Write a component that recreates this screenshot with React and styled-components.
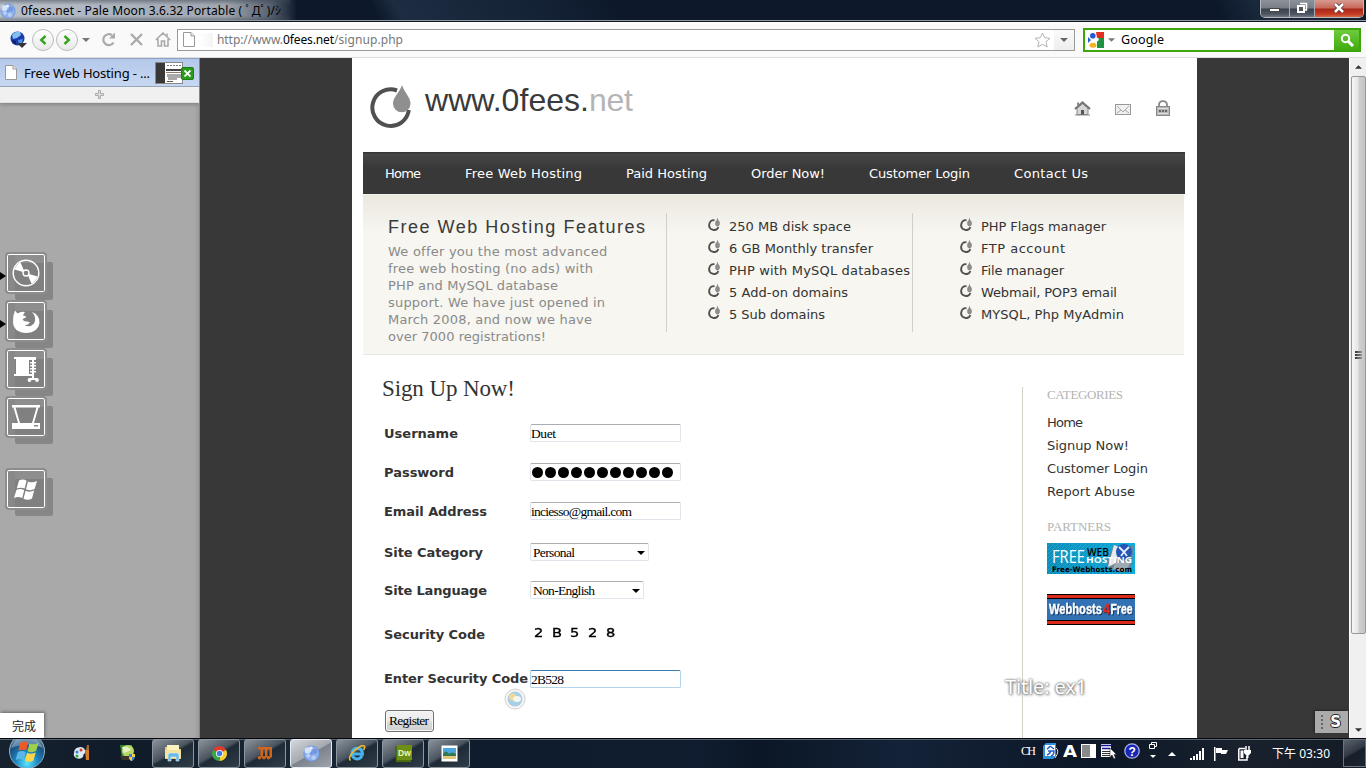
import React, { useLayoutEffect, useRef } from "react";
import styled, { createGlobalStyle, css } from "styled-components";

const SANS = `"DejaVu Sans", sans-serif`;
const SERIF = `"Liberation Serif", serif`;
const UI = `"Noto Sans", "Open Sans", "Noto Sans CJK TC", sans-serif`;

const GlobalStyle = createGlobalStyle`
  * { box-sizing: border-box; }
  body { margin: 0; overflow: hidden; background: #383838; }
  svg { display: block; flex: none; }
  ul { list-style: none; margin: 0; padding: 0; }
`;

/* ---------- text tracked to a fixed measure ---------- */
const Track = styled.span`
  display: inline-block;
  white-space: pre;
  flex: none;
`;

function Fit({ w, children, className }) {
  const ref = useRef(null);
  useLayoutEffect(() => {
    const el = ref.current;
    el.style.letterSpacing = "0px";
    el.style.width = "auto";
    const natural = el.getBoundingClientRect().width;
    el.style.letterSpacing = `${(w - natural) / Math.max(1, children.length - 1)}px`;
    el.style.width = `${w}px`;
  }, [w, children]);
  return <Track ref={ref} className={className}>{children}</Track>;
}

/* ---------- window frame ---------- */
const Desktop = styled.div`
  position: relative;
  width: 1366px;
  height: 768px;
  display: flex;
  flex-direction: column;
  overflow: hidden;
`;

const TitleBar = styled.header`
  height: 22px;
  flex: none;
  display: flex;
  align-items: flex-start;
  justify-content: space-between;
  border-bottom: 1px solid #10151d;
  box-shadow: inset 0 -1px 0 #8f97a1;
  background:
    linear-gradient(rgba(60, 70, 82, 0.5) 0, rgba(60, 70, 82, 0) 5px, rgba(60, 70, 82, 0) 16px, rgba(60, 70, 82, 0.55) 21px) 0 0 / 290px 100% no-repeat,
    linear-gradient(90deg, rgba(196, 202, 210, 0.95) 0, rgba(176, 182, 190, 0.9) 225px, rgba(120, 129, 141, 0.7) 270px, rgba(30, 44, 66, 0) 297px),
    linear-gradient(60deg, transparent 330px, rgba(60, 80, 106, 0.35) 350px, rgba(40, 58, 84, 0.25) 480px, transparent 540px),
    linear-gradient(65deg, transparent 1110px, rgba(58, 78, 104, 0.4) 1160px, transparent 1250px),
    #0d192b;
`;

const TitleLabel = styled.div`
  display: flex;
  align-items: center;
  gap: 5px;
  height: 21px;
  font: 12px/21px ${UI};
  color: #000;
`;

const WinButtons = styled.div`
  display: flex;
  width: 104px;
  height: 18px;
  margin-right: 2px;
  border: 1px solid #b6bac0;
  border-top: 0;
  border-radius: 0 0 5px 5px;
  overflow: hidden;
  box-shadow: 0 0 0 1px #1a222e;
`;

const WinButton = styled.div`
  width: ${(p) => p.$w}px;
  display: flex;
  align-items: center;
  justify-content: center;
  padding-top: ${(p) => p.$drop || 0}px;
  padding-bottom: 1px;
  border-right: ${(p) => (p.$close ? "0" : "1px solid #a9adb3")};
  background: ${(p) =>
    p.$close
      ? "linear-gradient(#d79a90 0, #c8685a 8px, #a8281a 9px, #c33a22 14px, #e07850 18px)"
      : "linear-gradient(#8d9299 0, #777d86 8px, #3a424e 9px, #4d5561 14px, #7d848e 18px)"};
`;

/* ---------- toolbar ---------- */
const Toolbar = styled.div`
  height: 36px;
  flex: none;
  display: flex;
  align-items: center;
  padding: 0 5px 0 6px;
  background: linear-gradient(#ffffff 0, #f9f9f9 3px, #fafafa);
  border-bottom: 1px solid #dedede;
`;

const NavSlot = styled.div`
  width: ${(p) => p.$w}px;
  flex: none;
  display: flex;
  justify-content: center;
`;

const RoundButton = styled.div`
  width: 22px;
  height: 22px;
  flex: none;
  margin-right: 2px;
  border: 1px solid #bcbcbc;
  border-radius: 50%;
  background: linear-gradient(#fff, #e9e9e9);
  display: flex;
  align-items: center;
  justify-content: center;
`;

const AddressBar = styled.div`
  width: 898px;
  height: 22px;
  flex: none;
  display: flex;
  align-items: center;
  border: 1px solid #999;
  background: #fff;
  padding-left: 5px;
  font: 12px/20px ${UI};
  color: #777;
`;

const UrlText = styled.div`
  flex: 1;
  display: flex;
  b { font-weight: 400; color: #000; }
`;

const Blotch = styled.div`
  width: 13px;
  height: 14px;
  margin: 0 4px 0 5px;
  background: linear-gradient(90deg, #fff, #f3f3f3);
`;

const DropCell = styled.div`
  width: 20px;
  height: 20px;
  margin-left: 3px;
  background: linear-gradient(#fafafa, #eee);
  display: flex;
  align-items: center;
  justify-content: center;
`;

const SearchBar = styled.div`
  width: 278px;
  height: 24px;
  flex: none;
  margin-left: auto;
  display: flex;
  align-items: center;
  border: 2px solid #3ca60d;
  background: #fff;
  padding-left: 3px;
  font: 12.5px/20px ${UI};
  color: #000;
`;

const SearchButton = styled.div`
  margin-left: auto;
  width: 25px;
  height: 20px;
  display: flex;
  align-items: center;
  justify-content: center;
  background: linear-gradient(#6fcb3d, #41ab10);
`;

/* ---------- browser body ---------- */
const Body = styled.div`
  height: 680px;
  flex: none;
  display: flex;
`;

const TabPanel = styled.aside`
  width: 200px;
  flex: none;
  display: flex;
  flex-direction: column;
  background: #a9a9a9;
  box-shadow: inset -1px 0 0 #858585, inset -4px 0 3px -1px #999;
`;

const Tab = styled.div`
  width: 199px;
  height: 29px;
  display: flex;
  align-items: center;
  padding-left: 5px;
  background: linear-gradient(#b4c8ea, #c8d8f3);
  border-top: 1px solid #8fa2c4;
  border-bottom: 1px solid #99a6ba;
  font: 13px/26px ${UI};
  color: #000;
`;

const TabThumb = styled.div`
  position: relative;
  margin-left: 5px;
`;

const TabClose = styled.div`
  position: absolute;
  right: -11px;
  top: 5px;
  width: 13px;
  height: 13px;
  border-radius: 2px;
  background: #2c9a1c;
  border: 1px solid #1f7d12;
  display: flex;
  align-items: center;
  justify-content: center;
`;

const NewTab = styled.div`
  width: 199px;
  height: 16px;
  display: flex;
  align-items: center;
  justify-content: center;
  background: #f0f0f0;
  border-bottom: 1px solid #e2e2e2;
  box-shadow: 0 2px 3px #888;
`;

const Dock = styled.div`
  display: flex;
  flex-direction: column;
  gap: 10px;
  padding: 151px 0 0 7px;
`;

const DockTile = styled.div`
  position: relative;
  width: 38px;
  height: 38px;
  margin-top: ${(p) => (p.$apart ? 24 : 0)}px;
  display: flex;
  align-items: center;
  justify-content: center;
  border: 1px solid #fff;
  border-radius: 2px;
  outline: 2px solid #8d8d8d;
  background: linear-gradient(#888, #888) 0 0 / 7px 100% no-repeat, linear-gradient(#8e8e8e, #8e8e8e) 0 0 / 100% 8px no-repeat, #808080;
  box-shadow: 8px 8px 0 0 #868686;
`;

const RunningMark = styled.div`
  position: absolute;
  left: -8px;
  top: 17px;
  border: 4px solid transparent;
  border-left: 6px solid #000;
  border-right: 0;
`;

const Status = styled.div`
  width: 44px;
  height: 25px;
  margin-top: auto;
  padding-left: 12px;
  background: #fff;
  box-shadow: 1px -1px 3px #666;
  font: 12px/26px "Noto Sans CJK TC", sans-serif;
  color: #222;
`;

const Viewport = styled.main`
  width: 1149px;
  flex: none;
  padding-left: 152px;
  background: #383838;
`;

const Page = styled.div`
  width: 845px;
  height: 680px;
  padding: 0 12px 0 11px;
  background: #fff;
  overflow: hidden;
  font: 13px/16px ${SANS};
  color: #333;
`;

const SiteHeader = styled.div`
  height: 94px;
  display: flex;
  align-items: flex-start;
`;

const LogoMark = styled.div`
  margin: 27px 0 0 7px;
`;

const SiteName = styled.div`
  margin: 24px 0 0 13px;
  font: 32px/37px "Liberation Sans", sans-serif;
  color: #3a3a3a;
  display: flex;
`;

const SiteTld = styled.span`
  color: #b5b5b5;
`;

const QuickLinks = styled.div`
  margin: 42px 15px 0 auto;
  display: flex;
  align-items: center;
  gap: 24px;
`;

const SiteNav = styled.nav`
  height: 42px;
  display: flex;
  gap: 44px;
  padding: 0 22px;
  line-height: 43px;
  color: #fff;
  background: linear-gradient(#363636 0, #363636 1px, #484848 2px, #383838 16px);
`;

const Features = styled.section`
  width: 821px;
  height: 161px;
  display: flex;
  padding-top: 19px;
  background: linear-gradient(#fbfaf8 0, #ebe8e0 1px, #f7f6f1 40px);
  border-bottom: 1px solid #e9e8db;
`;

const Intro = styled.div`
  width: 304px;
  height: 119px;
  padding-left: 25px;
  border-right: 1px solid #d0d0c6;
  color: #8a8a8a;
  line-height: 17px;
`;

const IntroTitle = styled.h2`
  margin: 0 0 4px;
  font: 18px/24px "Liberation Sans", sans-serif;
  padding-top: 2px;
  color: #3a3a3a;
`;

const FeatureList = styled.ul`
  width: ${(p) => p.$w}px;
  height: 119px;
  padding: 2px 0 0 ${(p) => p.$pad}px;
  border-right: ${(p) => (p.$ruled ? "1px solid #d0d0c6" : "0")};
`;

const FeatureItem = styled.li`
  height: 22px;
  display: flex;
  align-items: flex-start;
  gap: 8px;
  line-height: 24px;
  svg { margin-top: 2px; }
`;

const Columns = styled.div`
  display: flex;
`;

const FormColumn = styled.form`
  width: 659px;
  padding: 20px 0 0 21px;
`;

const FormTitle = styled.h1`
  margin: 0 0 0 -2px;
  height: 29px;
  font: 23px/28px ${SERIF};
  color: #333;
`;

const Row = styled.div`
  height: ${(p) => p.$h}px;
  display: flex;
  align-items: center;
`;

const Label = styled.label`
  width: 146px;
  flex: none;
  font-weight: 700;
  line-height: 16px;
  padding-top: ${(p) => (p.$raised ? 0 : 1)}px;
  padding-bottom: ${(p) => (p.$raised ? 1 : 0)}px;
`;

const Field = styled.div`
  width: ${(p) => p.$w || 151}px;
  height: 18px;
  display: flex;
  align-items: center;
  justify-content: space-between;
  padding: ${(p) => (p.$select ? "1px 3px 0 2px" : "1px 0 0 0")};
  border: 1px solid #dfe3ea;
  border-top-color: #abadb3;
  border-radius: 2px;
  background: #fff;
  font: 13.5px/16px ${SERIF};
  color: #000;
  ${(p) => p.$focus && css`
    border-color: #b3d3ea;
    border-top-color: #3d7bad;
  `}
`;

const Dots = styled.div`
  display: flex;
  gap: 2px;
  padding: 0 0 1px 1px;
  i { width: 11px; height: 11px; border-radius: 50%; background: #000; }
`;

const Code = styled.div`
  display: flex;
  padding: 0 0 2px 4px;
  font: 13px/14px ${SANS};
  color: #000;
  span {
    width: 18px;
    transform: scaleX(1.12);
    transform-origin: left;
    -webkit-text-stroke: 0.4px #000;
  }
`;

const Submit = styled.button`
  display: block;
  width: 49px;
  height: 22px;
  margin: 4px 0 0 1px;
  padding: 0 0 1px 3px;
  border: 1px solid #707070;
  border-radius: 3px;
  box-shadow: inset 0 0 0 1px #f8f8f8;
  background: linear-gradient(#f2f2f2 0, #ebebeb 50%, #dcdcdc 51%, #cfcfcf);
  font: 13.5px/19px ${SERIF};
  color: #000;
  text-align: left;
`;

const SideColumn = styled.aside`
  width: 163px;
  height: 360px;
  margin-top: 32px;
  padding-left: 24px;
  border-left: 1px solid #d3d0c6;
`;

const SideTitle = styled.h3`
  margin: ${(p) => p.$top || 0}px 0 0;
  font: 13px/16px ${SERIF};
  color: #b4b4b4;
`;

const SideLinks = styled.ul`
  padding-top: 8px;
  li { height: 23px; line-height: 23px; }
`;

const Banner = styled.svg.attrs({ width: 88, height: 31, viewBox: "0 0 88 31" })`
  margin-top: ${(p) => p.$top}px;
  .raised { filter: drop-shadow(1px 1px 0 #163a66); }
`;

const Scrollbar = styled.div`
  width: 17px;
  flex: none;
  display: flex;
  flex-direction: column;
  align-items: center;
  background: #f0f0f0;
  border-left: 1px solid #fff;
`;

const ScrollArrow = styled.div`
  height: 17px;
  display: flex;
  align-items: center;
`;

const Thumb = styled.div`
  width: 15px;
  height: 558px;
  margin: 1px 0 auto;
  border: 1px solid #979797;
  border-radius: 2px;
  background: linear-gradient(90deg, #f6f6f6, #e6e6e6 45%, #cfcfd0 55%, #c4c4c6);
  display: flex;
  flex-direction: column;
  align-items: center;
  justify-content: center;
  gap: 1px;
  i { width: 7px; height: 2px; background: linear-gradient(90deg, #333, #999); }
`;

/* ---------- floating overlays ---------- */
const BusyRing = styled.div`
  position: absolute;
  left: 504px;
  top: 688px;
`;

const Caption = styled.div`
  position: absolute;
  left: 1005px;
  top: 673px;
  font: 20px/28px ${UI};
  color: #fff;
  text-shadow: 0 0 2px #666, 1px 1px 3px #888, 0 0 3px #aaa;
`;

const ScriptBadge = styled.div`
  position: absolute;
  left: 1315px;
  top: 711px;
  width: 33px;
  height: 22px;
  display: flex;
  align-items: center;
  justify-content: space-between;
  padding: 0 7px 0 6px;
  background: #ababab;
  box-shadow: -1px -1px 2px #252525;
  font: 700 15px/22px ${SANS};
  color: #fff;
  text-shadow: 1px 0 #222, -1px 0 #222, 0 1px #222, 0 -1px #222;
`;

/* ---------- taskbar ---------- */
const Taskbar = styled.footer`
  height: 30px;
  flex: none;
  display: flex;
  align-items: flex-start;
  border-top: 1px solid #04070b;
  box-shadow: inset 0 1px 0 #5b6572;
  background: linear-gradient(90deg, #17222f 0, #101b29 130px, #1a2836 300px, #0f1c2d 480px, #101d30 700px, #0b1726 760px, #142238 900px, #0c1727 1100px, #19212d 1240px, #131b27);
`;

const StartOrb = styled.div`
  width: 38px;
  height: 29px;
  margin-left: 8px;
  overflow: hidden;
`;

const Quick = styled.div`
  width: ${(p) => p.$w}px;
  display: flex;
  justify-content: center;
  padding-top: 5px;
`;

const TaskButtons = styled.div`
  display: flex;
  gap: 4px;
  margin-left: 14px;
`;

const TaskButton = styled.div`
  width: 42px;
  height: 29px;
  display: flex;
  align-items: center;
  justify-content: center;
  padding-bottom: 1px;
  border: 1px solid ${(p) => (p.$active ? "#e8ebef" : "#8d959f")};
  border-radius: 3px;
  background: ${(p) =>
    p.$active
      ? "linear-gradient(150deg, #d5d8dc 0, #a4a9b0 50%, #7b828b 52%, #9ea4ac)"
      : "linear-gradient(150deg, #8b929b 0, #4b5560 45%, #1f2a37 52%, #313c49)"};
`;

const Tray = styled.div`
  margin-left: auto;
  height: 29px;
  display: flex;
  align-items: center;
`;

const TraySlot = styled.div`
  width: ${(p) => p.$w}px;
  padding-bottom: ${(p) => p.$up || 0}px;
  color: #fff;
  font: 12px/16px ${(p) => (p.$serif ? SERIF : UI)};
`;

const ShowDesktop = styled.div`
  width: 23px;
  height: 28px;
  align-self: flex-start;
  border: 1px solid #6a727d;
  background: linear-gradient(150deg, #5b636e 0, #303944 45%, #161e2a 52%, #1c2530);
`;

/* ---------- icons ---------- */
const Logo = () => (
  <svg width="42" height="44" viewBox="0 0 42 44">
    <path d="M27 5.500A18.300 18.300 0 1 0 38.800 25" fill="none" stroke="#505050" strokeWidth="4" />
    <path d="M32 0C34 7 40.500 12 40.500 18.500A8.700 8.700 0 0 1 23 18.500C23 12 30 7 32 0Z" fill="#8f8f8f" />
  </svg>
);

const Bullet = () => (
  <svg width="13" height="14" viewBox="0 0 13 14">
    <path d="M6.500 3.200A4.900 4.900 0 1 0 10.500 10.200" fill="none" stroke="#505050" strokeWidth="1.900" />
    <path d="M9.500 .5Q10 3.500 11.800 5V7.500Q11 9.500 9.500 9.500T7.200 7.500V5Q9 3.500 9.500 .5Z" fill="#8c8c8c" />
  </svg>
);

const Arrow = ({ color = "#777", w = 8, h = 4, up }) => (
  <svg width={w} height={h} viewBox="0 0 8 4">
    <path d={up ? "M0 4L4 0L8 4Z" : "M0 0H8L4 4Z"} fill={color} />
  </svg>
);

const PageIcon = () => (
  <svg width="12" height="15" viewBox="0 0 12 15">
    <path d="M.5.5H8L11.5 4V14.5H.5Z" fill="#fff" stroke="#999" />
    <path d="M8 .5V4H11.5" fill="#eee" stroke="#999" />
  </svg>
);

const MoonIcon = ({ size }) => (
  <svg width={size} height={size} viewBox="0 0 16 16">
    <circle cx="8" cy="8" r="7.600" fill="#6e96de" />
    <circle cx="8" cy="8" r="6.800" fill="#8fb0ea" />
    <circle cx="4.500" cy="5" r="3" fill="#d4e2fa" /><circle cx="7.500" cy="3" r="1.500" fill="#e6effc" />
    <circle cx="10" cy="12" r="2.200" fill="#b4cbf5" /><circle cx="5" cy="10" r="1.800" fill="#bdd1f6" />
    <circle cx="11" cy="6" r="2.400" fill="#7398e0" /><circle cx="8" cy="8" r="1.600" fill="#769be2" />
  </svg>
);

const WindowsFlag = ({ colors, size }) => (
  <svg width={size} height={size} viewBox="0 0 24 24">
    <path d="M5 2.500Q9 .5 12.600 2.800L10.600 10.600Q7 8.800 2.800 10.600Z" fill={colors[0]} />
    <path d="M14 3.400Q18 5.400 23 3L20.600 11Q16.500 13.200 12 11.200Z" fill={colors[1]} />
    <path d="M2.400 12Q6.600 10 10.200 12.200L8.200 20Q4.500 18 0 20Z" fill={colors[2]} />
    <path d="M11.600 12.800Q15.800 14.800 20.200 12.600L18 20.600Q14 23 9.500 20.800Z" fill={colors[3]} />
  </svg>
);

const dockTiles = [
  { running: true, art: (
    <g fill="none" stroke="#fff" strokeWidth="1.400">
      <circle cx="15" cy="15" r="12.800" /><circle cx="15" cy="15" r="3" />
      <path d="M13 12.500L9.500 4.500A12 12 0 0 0 3.500 11.500L12 14ZM17 17.500L20.500 25.500A12 12 0 0 0 26.500 18.500L18 16Z" fill="#fff" stroke="none" />
    </g>) },
  { running: true, art: (
    <path d="M4 4.500L6.500 7.500Q10 5 14 6Q12.500 7.500 12 9.500Q15 9.500 15 11.500L11.500 13Q12.500 16 16.500 15.500L19 16.500Q17 19.500 13.500 19Q19 22 23 17.500Q26 11.500 21 6Q29 9 28.500 17Q27 26.500 15.500 27Q3 26.500 2 16.500Q1.500 10 4 4.500Z" fill="#fff" />) },
  { art: (
    <g fill="#fff">
      <path d="M3 3H25V6H18V20H23V22H3V20H5V5H3Z" />
      <path d="M21 6H23V24H21ZM19 8H25V9.500H19ZM19 11H25V12.500H19ZM19 14H25V15.500H19ZM19 17H25V18.500H19ZM18 24H26V26H18Z" />
      <circle cx="18.500" cy="26" r="1.900" /><circle cx="26" cy="26" r="1.900" />
    </g>) },
  { art: (
    <g fill="#fff">
      <path d="M1 3H29V5.500H27.500L23 21H29V27H1V21H7L2.500 5.500H1ZM4.500 5.500L9 21H21L25.500 5.500Z" fillRule="evenodd" />
      <rect x="23" y="23" width="4" height="1.500" fill="#888" />
    </g>) },
  { apart: true, art: (
    <g transform="translate(3 4)"><WindowsFlag size={24} colors={["#fff", "#fff", "#fff", "#fff"]} /></g>) },
];

const taskIcons = [
  <svg width="20" height="20" viewBox="0 0 20 20">
    <path d="M2 4H8L9 6H18V16H2Z" fill="#e9cf76" /><path d="M4 2H16V8H4Z" fill="#fbf2bd" />
    <path d="M2 7H18V15H2Z" fill="#f5e29b" /><path d="M5 18V12Q5 10 7 10H14Q16 10 16 12V18H13V14H8V18Z" fill="#6cb9e8" stroke="#d9f0fc" strokeWidth=".6" />
  </svg>,
  <svg width="15" height="15" viewBox="0 0 16 16">
    <path d="M8 8L1.100 4A8 8 0 0 1 14.900 4Z" fill="#dd3b2e" /><path d="M8 8L14.900 4A8 8 0 0 1 8 16Z" fill="#fbcf2f" />
    <path d="M8 8L8 16A8 8 0 0 1 1.100 4Z" fill="#3aa64a" /><circle cx="8" cy="8" r="3.800" fill="#fff" /><circle cx="8" cy="8" r="2.900" fill="#3c7ce0" />
  </svg>,
  <svg width="16" height="16" viewBox="0 0 16 16">
    <path d="M1 2H15V12.500H12.500V4.500H10.500V12.500H8V4.500H6V12.500H3.500V4.500H1Z" fill="#d0661c" />
    <circle cx="2.500" cy="12.800" r="1.800" fill="#d0661c" /><circle cx="7" cy="12.800" r="1.800" fill="#d0661c" /><circle cx="11.500" cy="12.800" r="1.800" fill="#d0661c" />
  </svg>,
  <MoonIcon size={17} />,
  <svg width="18" height="18" viewBox="0 0 18 18">
    <path d="M14 11.500Q12.500 15 9 15Q4 14.500 4 9.500Q4.500 4.500 9 4.200Q14.500 4.500 14.500 10H5" fill="none" stroke="#45b2ee" strokeWidth="3" />
    <path d="M2.500 16.500Q-.5 14 5.500 7.500Q13 .5 16.200 2Q17.500 3 15.500 6" fill="none" stroke="#f2bd2d" strokeWidth="1.500" />
  </svg>,
  <svg width="17" height="17" viewBox="0 0 17 17">
    <path d="M0 1H16V17H1Z" fill="#4c6b0c" /><rect x="2" width="15" height="15" fill="#6d9014" />
    <text x="3" y="11" fontSize="8.500" fontWeight="700" fontFamily="Liberation Sans" fill="#eaf7bd">Dw</text>
  </svg>,
  <svg width="17" height="17" viewBox="0 0 17 17">
    <rect x=".5" y=".5" width="16" height="16" fill="#fff" /><rect x="2" y="3" width="13" height="11" fill="#4ba5de" />
    <path d="M2 9Q5 4 8 9Q11 6 15 9V12H2Z" fill="#327854" /><path d="M2 11H15V14H2Z" fill="#e2c77a" />
  </svg>,
];

const navItems = [["Home", 36], ["Free Web Hosting", 117], ["Paid Hosting", 81], ["Order Now!", 74], ["Customer Login", 101], ["Contact Us", 74]];
const introLines = [["We offer you the most advanced", 219], ["free web hosting (no ads) with", 205], ["PHP and MySQL database", 170], ["support. We have just opened in", 217], ["March 2008, and now we have", 204], ["over 7000 registrations!", 158]];
const featuresA = [["250 MB disk space", 122], ["6 GB Monthly transfer", 144], ["PHP with MySQL databases", 181], ["5 Add-on domains", 119], ["5 Sub domains", 96]];
const featuresB = [["PHP Flags manager", 125], ["FTP account", 84], ["File manager", 83], ["Webmail, POP3 email", 136], ["MYSQL, Php MyAdmin", 143]];
const sideLinks = [["Home", 36], ["Signup Now!", 82], ["Customer Login", 101], ["Report Abuse", 88]];

const Select = ({ w, textW, children }) => (
  <Field $w={w} $select>
    <Fit w={textW}>{children}</Fit>
    <Arrow color="#000" w={8} h={4} />
  </Field>
);

const FeatureColumn = ({ items, ...rest }) => (
  <FeatureList {...rest}>
    {items.map(([t, w]) => (
      <FeatureItem key={t}><Bullet /><Fit w={w}>{t}</Fit></FeatureItem>
    ))}
  </FeatureList>
);

function BrowserTitle() {
  return (
    <TitleBar>
      <TitleLabel><MoonIcon size={16} /><Fit w={260}>0fees.net - Pale Moon 3.6.32 Portable ( ﾟДﾟ)/ｼ</Fit></TitleLabel>
      <WinButtons>
        <WinButton $w={29} $drop={4}><svg width="11" height="4"><rect x=".5" y=".5" width="10" height="3" fill="#fff" stroke="#444" /></svg></WinButton>
        <WinButton $w={26}>
          <svg width="12" height="12" viewBox="0 0 12 12"><path d="M4 1.500H10.500V8H8.500" fill="none" stroke="#fff" strokeWidth="1.500" /><rect x="2" y="4" width="6" height="6" fill="#555" stroke="#fff" strokeWidth="2" /></svg>
        </WinButton>
        <WinButton $w={48} $close>
          <svg width="12" height="10" viewBox="0 0 12 10"><path d="M2 1L10 9M10 1L2 9" stroke="#4a2a28" strokeWidth="4" /><path d="M2 1L10 9M10 1L2 9" stroke="#fff" strokeWidth="2.600" /></svg>
        </WinButton>
      </WinButtons>
    </TitleBar>
  );
}

function BrowserToolbar() {
  return (
    <Toolbar>
      <NavSlot $w={26}>
        <svg width="18" height="17" viewBox="0 0 18 17">
          <circle cx="7.500" cy="7.500" r="7" fill="#1c3cae" /><path d="M2 4Q5 0 10 1L11 4L7 7L3 8Z" fill="#7fc0f0" /><path d="M8 9L13 8L12 12L9 14Z" fill="#4a90e0" /><path d="M2 9L6 10L6 13L3 12Z" fill="#0a1e70" />
          <path d="M7 12H17L12 17Z" fill="#333" />
        </svg>
      </NavSlot>
      <RoundButton><svg width="8" height="10"><path d="M6.500 1L2.200 5L6.500 9" fill="none" stroke="#34a51c" strokeWidth="2.400" /></svg></RoundButton>
      <RoundButton><svg width="8" height="10"><path d="M1.500 1L5.800 5L1.500 9" fill="none" stroke="#34a51c" strokeWidth="2.400" /></svg></RoundButton>
      <NavSlot $w={11}><Arrow /></NavSlot>
      <NavSlot $w={35}>
        <svg width="15" height="15" viewBox="0 0 15 15"><path d="M11 3.200A5.500 5.500 0 1 0 12.500 10.500" fill="none" stroke="#aaa" strokeWidth="2.200" /><path d="M8 6.500H14V.5Z" fill="#aaa" /></svg>
      </NavSlot>
      <NavSlot $w={21}><svg width="13" height="13"><path d="M1 1L12 12M12 1L1 12" stroke="#aaa" strokeWidth="2.400" /></svg></NavSlot>
      <NavSlot $w={2} />
      <NavSlot $w={28}>
        <svg width="16" height="15" viewBox="0 0 16 15"><path d="M.8 8L8 1L15.200 8M3 7V14H6.500V9H9.500V14H13V7M12 1.500V4" fill="none" stroke="#aaa" strokeWidth="1.600" /></svg>
      </NavSlot>
      <AddressBar>
        <PageIcon /><Blotch />
        <UrlText><Fit w={66}>http://www.</Fit><b><Fit w={51}>0fees.net</Fit></b><Fit w={69}>/signup.php</Fit></UrlText>
        <svg width="17" height="16" viewBox="0 0 17 16"><path d="M8.500 1L10.700 5.700L16 6.300L12 9.700L13.200 15L8.500 12.300L3.800 15L5 9.700L1 6.300L6.300 5.700Z" fill="#fff" stroke="#b4b4b4" /></svg>
        <DropCell><Arrow color="#666" /></DropCell>
      </AddressBar>
      <SearchBar>
        <svg width="16" height="16" viewBox="0 0 16 16">
          <rect width="16" height="16" fill="#fff" /><path d="M8 0H16V6H9Z" fill="#e33020" /><path d="M9 6H16V16H9Z" fill="#1e9442" /><path d="M0 5L3 8L0 11Z" fill="#2a5ad0" />
          <circle cx="4.800" cy="3.800" r="2.800" fill="#2a5ad0" /><circle cx="9" cy="7.500" r="1.800" fill="#fff" /><path d="M5 7Q9 9 9 12L5 10Z" fill="#fff" /><ellipse cx="5" cy="13.300" rx="3.400" ry="2.500" fill="#f2b320" />
        </svg>
        <NavSlot $w={14}><Arrow w={7} /></NavSlot>
        <NavSlot $w={3} />
        <Fit w={43}>Google</Fit>
        <SearchButton><svg width="14" height="14"><circle cx="5.500" cy="5.500" r="3.700" fill="none" stroke="#fff" strokeWidth="2" /><path d="M8 8L13 13" stroke="#fff" strokeWidth="3" /></svg></SearchButton>
      </SearchBar>
    </Toolbar>
  );
}

function SideTabs() {
  return (
    <TabPanel>
      <Tab>
        <PageIcon />
        <NavSlot $w={7} />
        <Fit w={126}>Free Web Hosting - ...</Fit>
        <TabThumb>
          <svg width="28" height="22" viewBox="0 0 28 22">
            <rect width="28" height="22" fill="#fff" /><rect width="10" height="22" fill="#383838" />
            <path d="M12 3.500H26" stroke="#777" strokeDasharray="2 1" /><path d="M11 7H28V9H11Z" fill="#444" /><path d="M11 10.500H28" stroke="#8a7a70" /><path d="M12 12H26V16H22V18H13V15H12Z" fill="#aaa" /><path d="M12 19.500H18" stroke="#654" />
            <rect x=".5" y=".5" width="27" height="21" fill="none" stroke="#888" />
          </svg>
          <TabClose><svg width="7" height="7"><path d="M.5 .5L6.500 6.500M6.500 .5L.5 6.500" stroke="#fff" strokeWidth="1.800" /></svg></TabClose>
        </TabThumb>
      </Tab>
      <NewTab><svg width="9" height="9"><path d="M3.500 .5H5.500V3.500H8.500V5.500H5.500V8.500H3.500V5.500H.5V3.500H3.500Z" fill="#ddd" stroke="#aaa" /></svg></NewTab>
      <Dock>
        {dockTiles.map((t, i) => (
          <DockTile key={i} $apart={t.apart}>
            {t.running && <RunningMark />}
            <svg width="30" height="30" viewBox="0 0 30 30">{t.art}</svg>
          </DockTile>
        ))}
      </Dock>
      <Status>完成</Status>
    </TabPanel>
  );
}

function SignupForm() {
  return (
    <FormColumn>
      <FormTitle><Fit w={133}>Sign Up Now!</Fit></FormTitle>
      <Row $h={58}><Label><Fit w={74}>Username</Fit></Label><Field><Fit w={25}>Duet</Fit></Field></Row>
      <Row $h={20}><Label><Fit w={70}>Password</Fit></Label><Field><Dots>{Array.from({ length: 11 }, (_, i) => <i key={i} />)}</Dots></Field></Row>
      <Row $h={58}><Label><Fit w={103}>Email Address</Fit></Label><Field><Fit w={101}>inciesso@gmail.com</Fit></Field></Row>
      <Row $h={24}><Label><Fit w={99}>Site Category</Fit></Label><Select w={119} textW={42}>Personal</Select></Row>
      <Row $h={52}><Label><Fit w={103}>Site Language</Fit></Label><Select w={114} textW={62}>Non-English</Select></Row>
      <Row $h={36}><Label><Fit w={101}>Security Code</Fit></Label><Code>{[..."2B528"].map((c, i) => <span key={i}>{c}</span>)}</Code></Row>
      <Row $h={54}><Label $raised><Fit w={144}>Enter Security Code</Fit></Label><Field $focus><Fit w={33}>2B528</Fit></Field></Row>
      <Submit type="button"><Fit w={40}>Register</Fit></Submit>
    </FormColumn>
  );
}

function SideBar() {
  return (
    <SideColumn>
      <SideTitle><Fit w={76}>CATEGORIES</Fit></SideTitle>
      <SideLinks>{sideLinks.map(([t, w]) => <li key={t}><Fit w={w}>{t}</Fit></li>)}</SideLinks>
      <SideTitle $top={16}><Fit w={64}>PARTNERS</Fit></SideTitle>
      <Banner $top={8}>
        <defs>
          <linearGradient id="sea" x2="1"><stop stopColor="#0c8db8" /><stop offset="1" stopColor="#0aa9dc" /></linearGradient>
          <pattern id="hatch" width="4" height="4" patternUnits="userSpaceOnUse"><path d="M0 4L4 0" stroke="#36b6dd" strokeWidth=".5" /></pattern>
        </defs>
        <rect width="88" height="31" fill="url(#sea)" /><rect width="88" height="31" fill="url(#hatch)" />
        <path d="M66 3L86 3L85 22L78 30L62 25L60 20Z" fill="#75838f" /><path d="M67 2L72 4L69 20L61 24Z" fill="#e3e9ec" /><path d="M68 20L84 18L79 29L66 26Z" fill="#9eaab3" />
        <circle cx="77" cy="9" r="8" fill="#2454b4" /><path d="M72 4L77 9L82 4M77 9L74 13M77 9L80 13" stroke="#e5eeff" strokeWidth="1.800" fill="none" />
        <text x="5" y="20" fontFamily="Open Sans" fontSize="17.500" textLength="33" lengthAdjust="spacingAndGlyphs" fill="#fff">FREE</text>
        <text x="40" y="12.500" fontFamily="Open Sans" fontSize="11" fontWeight="600" textLength="22" lengthAdjust="spacingAndGlyphs" fill="#000">WEB</text>
        <text x="39" y="20" fontFamily="Open Sans" fontSize="9.500" fontWeight="700" textLength="46" lengthAdjust="spacingAndGlyphs" fill="#fff">HOSTING</text>
        <text x="5" y="28.500" fontFamily="DejaVu Sans" fontSize="7.500" fontWeight="700" textLength="80" lengthAdjust="spacingAndGlyphs" fill="#000">Free-Webhosts.com</text>
      </Banner>
      <Banner $top={20}>
        <rect width="88" height="31" fill="#000" /><rect y="1" width="88" height="3" fill="#da2a1c" /><rect y="27" width="88" height="3" fill="#da2a1c" />
        <rect y="5" width="88" height="21" fill="#3272b4" />
        <g className="raised" fontFamily="Liberation Sans" fontWeight="700" fontSize="14" fill="#fff" stroke="#fff" strokeWidth=".4">
          <text x="2" y="19.500" textLength="53" lengthAdjust="spacingAndGlyphs">Webhosts</text>
          <text x="56" y="19.500" textLength="7" lengthAdjust="spacingAndGlyphs" fill="#e8281a" stroke="#e8281a">4</text>
          <text x="63.500" y="19.500" textLength="22" lengthAdjust="spacingAndGlyphs">Free</text>
        </g>
      </Banner>
    </SideColumn>
  );
}

function WebPage() {
  return (
    <Page>
      <SiteHeader>
        <LogoMark><Logo /></LogoMark>
        <SiteName><Fit w={164}>www.0fees.</Fit><SiteTld><Fit w={44}>net</Fit></SiteTld></SiteName>
        <QuickLinks>
          <svg width="17" height="16" viewBox="0 0 17 16">
            <path d="M3 8V14.500H14V8L8.500 3.500Z" fill="#d6d6d6" stroke="#888" /><path d="M1 9L8.500 2.500L16 9" fill="none" stroke="#777" strokeWidth="2.200" /><path d="M7 10H10V15H7Z" fill="#555" /><path d="M3 2.500H5V5H3Z" fill="#888" /><path d="M1 15H16" stroke="#888" />
          </svg>
          <svg width="17" height="14" viewBox="0 0 17 14"><rect x=".5" y="3.500" width="15" height="10" fill="#f0f0f0" stroke="#999" /><path d="M2 5L8 11L14 5M2 12L6 9M14 12L10 9" fill="none" stroke="#aaa" /></svg>
          <svg width="14" height="16" viewBox="0 0 14 16">
            <path d="M3 7V5Q3 1.200 7 1.200T11 5V7" fill="none" stroke="#888" strokeWidth="1.800" /><rect x=".5" y="6.500" width="13" height="9" fill="#b8b8b8" stroke="#888" /><path d="M2 8.500H12M2 13.500H12" stroke="#ddd" /><path d="M3 11H11" stroke="#666" strokeWidth="2" strokeDasharray="2 1" />
          </svg>
        </QuickLinks>
      </SiteHeader>
      <SiteNav>{navItems.map(([t, w]) => <Fit key={t} w={w}>{t}</Fit>)}</SiteNav>
      <Features>
        <Intro>
          <IntroTitle><Fit w={257}>Free Web Hosting Features</Fit></IntroTitle>
          {introLines.map(([t, w]) => <div key={t}><Fit w={w}>{t}</Fit></div>)}
        </Intro>
        <FeatureColumn items={featuresA} $w={246} $pad={41} $ruled />
        <FeatureColumn items={featuresB} $w={250} $pad={47} />
      </Features>
      <Columns><SignupForm /><SideBar /></Columns>
    </Page>
  );
}

function SystemBar() {
  return (
    <Taskbar>
      <StartOrb>
        <svg width="38" height="38" viewBox="0 0 38 38">
          <defs><radialGradient id="orb" cx=".5" cy=".85" r=".8"><stop stopColor="#5fe6ff" /><stop offset=".4" stopColor="#1c86c0" /><stop offset=".75" stopColor="#1b4e7c" /><stop offset="1" stopColor="#7d99b0" /></radialGradient></defs>
          <circle cx="19" cy="12" r="17.500" fill="url(#orb)" stroke="#8fb0c5" /><path d="M3 9Q10 -6 19 -5T35 9Q20 2 3 9Z" fill="#a9c3d6" opacity=".5" />
          <g transform="translate(7.500 1)"><WindowsFlag size={24} colors={["#ee5a26", "#9fd04c", "#59b6e8", "#fdd549"]} /></g>
        </svg>
      </StartOrb>
      <Quick $w={70}>
        <svg width="17" height="17" viewBox="0 0 17 17">
          <path d="M1 9Q1 3 8 3Q13 4 12 9Q10 10 10 13Q7 16 3 14Q0 12 1 9Z" fill="#dce9f4" /><circle cx="4" cy="8" r="1.500" fill="#2c88d8" /><circle cx="8" cy="6" r="1.500" fill="#dd3b20" /><circle cx="4" cy="12" r="1.500" fill="#35a536" />
          <path d="M12 6H16V16H13Z" fill="#d77a2a" /><path d="M13 6L14 1H16V6Z" fill="#9a6a3c" />
        </svg>
      </Quick>
      <Quick $w={22}>
        <svg width="17" height="17" viewBox="0 0 17 17">
          <path d="M1 1H13V15H3Z" fill="#2d8b32" /><circle cx="9" cy="7" r="6" fill="#b9d86a" /><path d="M3 3Q8 1 12 6L5 9Z" fill="#e8f3c5" /><path d="M1 12H10V16H3Z" fill="#3e332a" /><path d="M10 10H16V13Q15 16 13 17Q10 16 10 13Z" fill="#3d7fdc" /><path d="M13 10H16V13H13ZM10 13H13V17Q10 16 10 13Z" fill="#f4ce3c" />
        </svg>
      </Quick>
      <TaskButtons>{taskIcons.map((icon, i) => <TaskButton key={i} $active={i === 3}>{icon}</TaskButton>)}</TaskButtons>
      <Tray>
        <TraySlot $w={22} $up={5} $serif><Fit w={15}>CH</Fit></TraySlot>
        <TraySlot $w={20} $up={5}><svg width="16" height="16"><path d="M0 3L3 0H13V13L10 16H0Z" fill="#2f91dc" /><rect x="2" y="2" width="10" height="11" fill="#fff" /><path d="M4 6Q6 5 7 3M7 3L11 6M5 8H11Q11 12 8 13M8 8Q7 11 4 12" stroke="#2460c8" strokeWidth="1.500" fill="none" /><path d="M13 5Q17 8 12 15" stroke="#ddd" fill="none" /></svg></TraySlot>
        <TraySlot $w={18} $up={5}><svg width="15" height="16"><text x="0" y="14" fontFamily="DejaVu Sans" fontWeight="700" fontSize="16" textLength="14" lengthAdjust="spacingAndGlyphs" fill="#fff">A</text></svg></TraySlot>
        <TraySlot $w={20} $up={5}><svg width="15" height="14"><rect width="15" height="14" fill="#fff" /><rect x="1" y="1" width="8" height="12" fill="#8a8a8a" /></svg></TraySlot>
        <TraySlot $w={23} $up={4}><svg width="16" height="15"><rect width="10" height="13" fill="#fff" /><path d="M0 1.500H10M1 4.500H9" stroke="#14149a" strokeWidth="1.500" /><path d="M1 7.500H9M1 9.500H9M1 11.500H9" stroke="#333" /><path d="M9 4V13L11 11L13 15L14.500 14L13 10.500H15.500Z" fill="#fff" stroke="#111" strokeWidth=".5" /></svg></TraySlot>
        <TraySlot $w={25} $up={5}><svg width="16" height="16"><circle cx="8" cy="8" r="7.200" fill="#1726b5" stroke="#aab2e8" strokeWidth="1.300" /><text x="4.500" y="12.500" fontFamily="Liberation Sans" fontWeight="700" fontSize="12" fill="#fff">?</text></svg></TraySlot>
        <TraySlot $w={19} $up={6}><svg width="9" height="17"><path d="M2.500 3V.5H7.500V4.500H5.500M.5 2.500H5.500V6.500H.5Z" fill="none" stroke="#fff" /><path d="M1 13H7L4 16Z" fill="#fff" /></svg></TraySlot>
        <TraySlot $w={22}><Arrow up color="#fff" w={8} h={4} /></TraySlot>
        <TraySlot $w={24}><svg width="15" height="12"><path d="M0 10H2V12H0ZM3 8H5V12H3ZM6 6H8V12H6ZM9 3H11V12H9ZM12 0H14V12H12Z" fill="#fff" /></svg></TraySlot>
        <TraySlot $w={24}><svg width="15" height="14"><path d="M0 0H1.500V14H0ZM2 1H8V3H14L12 7H7V6H2Z" fill="#fff" /></svg></TraySlot>
        <TraySlot $w={34}><svg width="14" height="15"><path d="M1 2.500H7M.8 2.500V14H9V10" fill="none" stroke="#fff" strokeWidth="1.500" /><path d="M2.500 4.500H5.500V12H2.500Z" fill="#fff" /><path d="M8 0V4M11 0V4" stroke="#fff" strokeWidth="1.500" /><path d="M6 4H13V7L10.500 9.500V12H8.500V9.500L6 7Z" fill="#fff" /></svg></TraySlot>
        <TraySlot $w={71} $up={0}><Fit w={58}>下午 03:30</Fit></TraySlot>
        <ShowDesktop />
      </Tray>
    </Taskbar>
  );
}

export default function App() {
  return (
    <Desktop>
      <GlobalStyle />
      <BrowserTitle />
      <BrowserToolbar />
      <Body>
        <SideTabs />
        <Viewport><WebPage /></Viewport>
        <Scrollbar>
          <ScrollArrow><Arrow up color="#333" w={7} h={4} /></ScrollArrow>
          <Thumb><i /><i /><i /></Thumb>
          <ScrollArrow><Arrow color="#333" w={7} h={4} /></ScrollArrow>
        </Scrollbar>
      </Body>
      <SystemBar />
      <BusyRing>
        <svg width="22" height="22"><circle cx="11" cy="11" r="10" fill="#f6f6f6" stroke="#d2d2d2" /><circle cx="11" cy="11" r="7.500" fill="#a9cfe6" /><circle cx="8.500" cy="9" r="3.600" fill="#f2d79b" /><ellipse cx="13" cy="11" rx="4" ry="3" fill="#f4f6f2" /></svg>
      </BusyRing>
      <Caption><Fit w={82}>Title: ex1</Fit></Caption>
      <ScriptBadge><svg width="2" height="14"><path d="M1 0V14" stroke="#666" strokeWidth="2" strokeDasharray="2 2" /></svg>S</ScriptBadge>
    </Desktop>
  );
}
